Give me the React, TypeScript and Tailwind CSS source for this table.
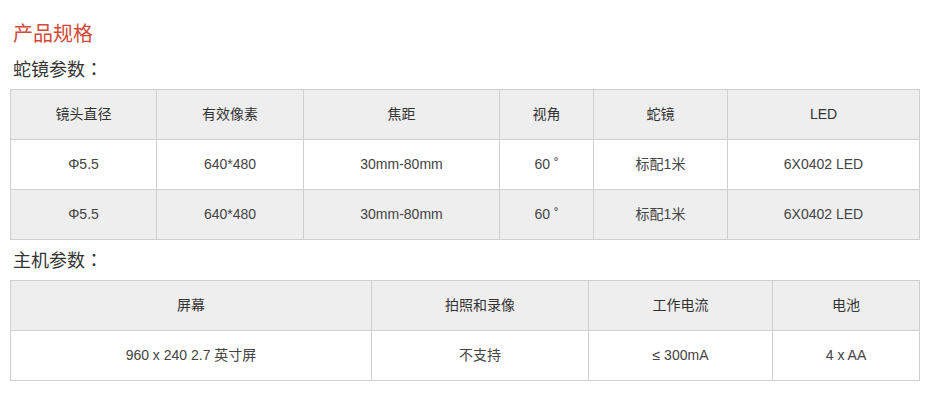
import React from "react";

const font = { fontFamily: '"Liberation Sans", "Noto Sans CJK SC", sans-serif' };
const colonFont = { fontFamily: '"Noto Sans CJK TC", sans-serif' };

const t1Cols = [146, 147, 196, 94, 134, 192];
const t1Head = ["镜头直径", "有效像素", "焦距", "视角", "蛇镜", "LED"];
const t1Rows = [
  ["Φ5.5", "640*480", "30mm-80mm", "60 ˚", "标配1米", "6X0402 LED"],
  ["Φ5.5", "640*480", "30mm-80mm", "60 ˚", "标配1米", "6X0402 LED"],
];

const t2Cols = [361, 217, 184, 147];
const t2Head = ["屏幕", "拍照和录像", "工作电流", "电池"];
const t2Rows = [["960 x 240 2.7 英寸屏", "不支持", "≤ 300mA", "4 x AA"]];

function Table({ cols, head, rows }: { cols: number[]; head: string[]; rows: string[][] }) {
  return (
    <table className="ml-[10px] w-[910px] table-fixed border-collapse text-[14px] text-[#444]">
      <colgroup>
        {cols.map((w, i) => (
          <col key={i} style={{ width: w }} />
        ))}
      </colgroup>
      <tbody>
        <tr className="h-[50px] bg-[#eeeeee]">
          {head.map((h, i) => (
            <td key={i} className="border border-[#cfcfcf] p-0 text-center align-middle text-[#333]">
              {h}
            </td>
          ))}
        </tr>
        {rows.map((r, ri) => (
          <tr key={ri} className={ri % 2 === 1 ? "h-[50px] bg-[#eeeeee]" : "h-[50px] bg-white"}>
            {r.map((c, i) => (
              <td key={i} className="border border-[#cfcfcf] p-0 text-center align-middle">
                {c}
              </td>
            ))}
          </tr>
        ))}
      </tbody>
    </table>
  );
}

export default function App() {
  return (
    <div className="h-[402px] w-[935px] overflow-hidden bg-white" style={font}>
      <div className="pt-[12px]">
        <div className="h-[44px] pl-[13px] text-[20px] leading-[44px] text-[#d4483a]">产品规格</div>
        <div className="mb-[9px] h-[24px] pl-[13px] text-[18px] leading-[24px] text-[#333]">
          蛇镜参数<span style={colonFont}>：</span>
        </div>
        <Table cols={t1Cols} head={t1Head} rows={t1Rows} />
        <div className="h-[40px] pl-[13px] text-[18px] leading-[38px] text-[#333]">
          主机参数<span style={colonFont}>：</span>
        </div>
        <Table cols={t2Cols} head={t2Head} rows={t2Rows} />
      </div>
    </div>
  );
}
